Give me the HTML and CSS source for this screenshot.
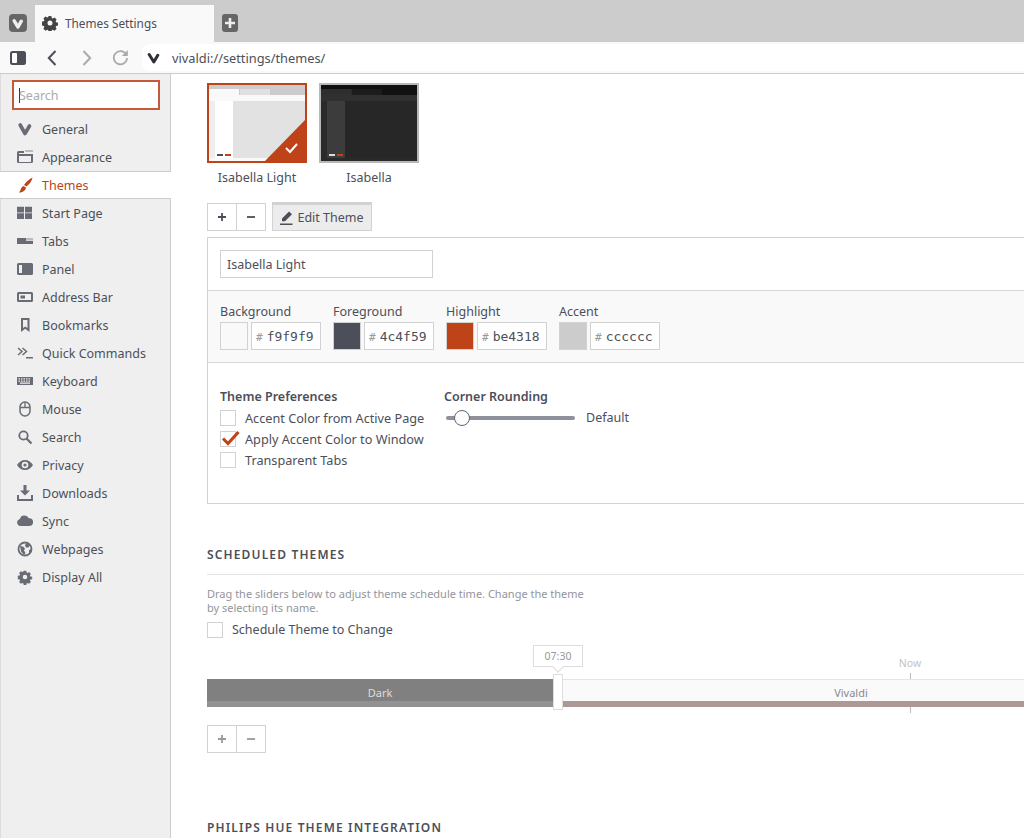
FILE: index.html
```html
<!DOCTYPE html>
<html lang="en">
<head>
    <meta charset="UTF-8">
    <title>Themes Settings</title>
    <link rel="stylesheet" href="styles.css">
</head>
<body>
    <div class="tabbar">
        <div class="vivaldi-btn">
            <svg width="18" height="18" viewBox="0 0 18 18"><rect width="18" height="18" rx="4" fill="#666"/><path d="M5.200 6.800L9 13l3.300-5.800" fill="none" stroke="#eee" stroke-width="3.400" stroke-linecap="round" stroke-linejoin="round"/></svg>
        </div>
        <div class="tab">
            <svg class="tab-icon" width="16" height="16" viewBox="0 0 16 16"><path fill="#444" fill-rule="evenodd" d="M6.600 1h2.800l.4 2 1 .5 1.800-1 2 2-1 1.800.5 1 2 .4v2.800l-2 .4-.5 1 1 1.800-2 2-1.800-1-1 .5-.4 2H6.600l-.4-2-1-.5-1.800 1-2-2 1-1.800-.5-1-2-.4V6.600l2-.4.5-1-1-1.800 2-2 1.800 1 1-.5zM8 5.500a2.500 2.500 0 1 0 0 5 2.500 2.500 0 0 0 0-5z"/></svg>
            <span>Themes Settings</span>
        </div>
        <div class="newtab">
            <svg width="16" height="18" viewBox="0 0 16 18"><rect width="16" height="18" y="0" rx="3" fill="#666"/><path d="M8 4v10M3 9h10" stroke="#eee" stroke-width="2.600"/></svg>
        </div>
    </div>

    <div class="toolbar">
        <svg class="tool panel-toggle" width="16" height="14" viewBox="0 0 16 14"><rect width="16" height="14" rx="2.500" fill="#4c4f59"/><rect x="2" y="2" width="5" height="10" rx="1" fill="#fff"/></svg>
        <svg class="tool back" width="10" height="16" viewBox="0 0 10 16"><path d="M8.500 1L1.800 8l6.700 7" fill="none" stroke="#4c4f59" stroke-width="2"/></svg>
        <svg class="tool forward" width="10" height="16" viewBox="0 0 10 16"><path d="M1.500 1l6.700 7-6.700 7" fill="none" stroke="#a9aaae" stroke-width="2"/></svg>
        <svg class="tool reload" width="17" height="17" viewBox="0 0 17 17"><path d="M14 5.200A6.600 6.600 0 1 0 15 9" fill="none" stroke="#a9aaae" stroke-width="1.800"/><path d="M15.800 1v6h-6z" fill="#a9aaae"/></svg>
        <div class="address">
            <svg width="14" height="12" viewBox="0 0 14 12"><path d="M2.200 2.500L6.800 10l4-6.800" fill="none" stroke="#2f3139" stroke-width="3" stroke-linecap="round" stroke-linejoin="round"/></svg>
            <span>vivaldi://settings/themes/</span>
        </div>
    </div>

    <div class="main">
        <aside class="sidebar">
            <div class="search-wrap">
                <div class="search"><i class="caret"></i>Search</div>
            </div>
            <ul class="nav">
                <li><svg width="16" height="16" viewBox="0 0 16 16"><path d="M3.200 4L8 12.500 12.500 5" fill="none" stroke="#696b75" stroke-width="3.600" stroke-linecap="round" stroke-linejoin="round"/></svg>General</li>
                <li><svg width="16" height="16" viewBox="0 0 16 16"><path d="M0 3.500a1.500 1.500 0 0 1 1.500-1.500H7v2h-5v1h14v7.500a1.500 1.500 0 0 1-1.500 1.500h-13A1.500 1.500 0 0 1 0 12.500zM2 7v6h12V7z" fill="#696b75"/><rect x="8" y="1" width="8" height="2" fill="#b9bac0"/></svg>Appearance</li>
                <li class="active"><svg width="16" height="16" viewBox="0 0 16 16"><path d="M15.500.5C15 4 12.500 7 9.500 9.500L7 8C9 5 12 2 15.500.5zM6.300 9L9 10.500C8.500 14 5.500 15.500 2 15.500 3.800 14 3.500 10.500 6.300 9z" fill="#be4318"/></svg>Themes</li>
                <li><svg width="16" height="16" viewBox="0 0 16 16"><path d="M0 1.700h7v5.700H0zM8 1.700h7v5.700H8zM0 8.300h7V14H0zM8 8.300h7V14H8z" fill="#696b75"/></svg>Start Page</li>
                <li><svg width="16" height="16" viewBox="0 0 16 16"><path d="M0 5h9v3h7v3H0z" fill="#696b75"/><rect x="9" y="5" width="7" height="2.500" fill="#b9bac0"/></svg>Tabs</li>
                <li><svg width="16" height="16" viewBox="0 0 16 16"><path fill-rule="evenodd" d="M1.500 2h13A1.500 1.500 0 0 1 16 3.500v9a1.500 1.500 0 0 1-1.500 1.500h-13A1.500 1.500 0 0 1 0 12.500v-9A1.500 1.500 0 0 1 1.500 2zM2 4v8h3V4z" fill="#696b75"/></svg>Panel</li>
                <li><svg width="16" height="16" viewBox="0 0 16 16"><path fill-rule="evenodd" d="M1.500 3h13A1.500 1.500 0 0 1 16 4.500v7a1.500 1.500 0 0 1-1.500 1.500h-13A1.500 1.500 0 0 1 0 11.500v-7A1.500 1.500 0 0 1 1.500 3zM2 5v6h12V5zM3.500 6.500H8v3H3.500z" fill="#696b75"/></svg>Address Bar</li>
                <li><svg width="16" height="16" viewBox="0 0 16 16"><path fill-rule="evenodd" d="M4 1h8.500v14L8.200 11.800 4 15zM6 3v8l2.200-1.500 2.300 1.500V3z" fill="#696b75"/></svg>Bookmarks</li>
                <li><svg width="16" height="16" viewBox="0 0 16 16"><path d="M1 3l4 3.500L1 10M5.500 3l4 3.500-4 3.500" fill="none" stroke="#696b75" stroke-width="1.500"/><rect x="9" y="12" width="7" height="1.500" fill="#696b75"/></svg>Quick Commands</li>
                <li><svg width="16" height="16" viewBox="0 0 16 16"><path fill-rule="evenodd" d="M0 4h16v8H0zM1.500 5.200v1.300h1.500V5.200zm2.500 0v1.300h1.500V5.200zm2.500 0v1.300H8V5.200zm2.500 0v1.300h1.500V5.200zm2.500 0v1.300h1.500V5.200zM1.500 7.400v1.300h1.500V7.400zm2.500 0v1.300h1.500V7.400zm2.500 0v1.300H8V7.400zm2.500 0v1.300h1.500V7.400zm2.500 0v1.300h1.500V7.400zM3 9.600v1.200h10V9.600z" fill="#696b75"/></svg>Keyboard</li>
                <li><svg width="16" height="16" viewBox="0 0 16 16"><rect x="3" y="1" width="10" height="14" rx="5" fill="none" stroke="#696b75" stroke-width="1.500"/><path d="M3 6.500h10M8 1v5.500" stroke="#696b75" stroke-width="1.300"/></svg>Mouse</li>
                <li><svg width="16" height="16" viewBox="0 0 16 16"><circle cx="6.500" cy="6.500" r="4.200" fill="none" stroke="#696b75" stroke-width="1.800"/><path d="M9.500 9.500l5 5" stroke="#696b75" stroke-width="2.200"/></svg>Search</li>
                <li><svg width="16" height="16" viewBox="0 0 16 16"><path fill-rule="evenodd" d="M0 8c1.800-3 4.600-5 8-5s6.200 2 8 5c-1.800 3-4.600 5-8 5s-6.200-2-8-5zm8-3.300a3.300 3.300 0 1 0 0 6.600 3.300 3.300 0 0 0 0-6.600zM8 6.400a1.600 1.600 0 1 1 0 3.200 1.600 1.600 0 0 1 0-3.200z" fill="#696b75"/></svg>Privacy</li>
                <li><svg width="16" height="16" viewBox="0 0 16 16"><path d="M6.500 0h3v5.500H13L8 10.500 3 5.500h3.500zM0 10h2v4h12v-4h2v6H0z" fill="#696b75"/></svg>Downloads</li>
                <li><svg width="16" height="16" viewBox="0 0 16 16"><path d="M3.500 13A3.500 3.500 0 0 1 2.800 6.100 4.800 4.800 0 0 1 11.800 5.200 3.900 3.900 0 0 1 12.500 13z" fill="#696b75"/></svg>Sync</li>
                <li><svg width="16" height="16" viewBox="0 0 16 16"><circle cx="8" cy="8" r="6.500" fill="none" stroke="#696b75" stroke-width="1.800"/><path d="M3 5l3 .5 2 2-1 2 1.500 2.500-1.500 2-3-3.500zM9 2l4 2-1.500 2.500H9L8 4.500zM12 9l2.500-1-1 4-1.500 1z" fill="#696b75"/></svg>Webpages</li>
                <li><svg width="16" height="16" viewBox="-1 -1 18 18"><path fill="#696b75" fill-rule="evenodd" d="M6.600 1h2.800l.4 2 1 .5 1.800-1 2 2-1 1.800.5 1 2 .4v2.800l-2 .4-.5 1 1 1.800-2 2-1.800-1-1 .5-.4 2H6.600l-.4-2-1-.5-1.800 1-2-2 1-1.800-.5-1-2-.4V6.600l2-.4.5-1-1-1.800 2-2 1.800 1 1-.5zM8 5.500a2.500 2.500 0 1 0 0 5 2.500 2.500 0 0 0 0-5z"/></svg>Display All</li>
            </ul>
        </aside>

        <main class="content">
            <div class="theme-list">
                <div class="theme-item">
                    <svg class="thumb" width="100" height="80" viewBox="0 0 100 80">
                        <rect width="100" height="80" fill="#be4318"/>
                        <rect x="2" y="2" width="96" height="76" fill="#f9f9f9"/>
                        <rect x="2" y="2" width="96" height="10" fill="#ccc"/>
                        <rect x="2" y="6" width="30" height="6" fill="#f9f9f9"/>
                        <rect x="33" y="6" width="30" height="6" fill="#e0e0e0"/>
                        <rect x="2" y="18" width="6" height="57" fill="#eee"/>
                        <rect x="8" y="18" width="18" height="57" fill="#fff"/>
                        <rect x="26" y="18" width="72" height="57" fill="#e2e2e2"/>
                        <rect x="10" y="71" width="6" height="2" fill="#4c4f59"/>
                        <rect x="18" y="71" width="6" height="2" fill="#be4318"/>
                        <path d="M58 78L98 37v43H58z" fill="#be4318"/>
                        <path d="M79 65l4 4 7-8" fill="none" stroke="#fff" stroke-width="2"/>
                    </svg>
                    <span>Isabella Light</span>
                </div>
                <div class="theme-item">
                    <svg class="thumb" width="100" height="80" viewBox="0 0 100 80">
                        <rect width="100" height="80" fill="#b8b8b8"/>
                        <rect x="2" y="2" width="96" height="76" fill="#2a2a2a"/>
                        <rect x="2" y="2" width="96" height="4" fill="#0f0f0f"/>
                        <rect x="2" y="6" width="30" height="6" fill="#2e2e2e"/>
                        <rect x="33" y="6" width="30" height="6" fill="#1c1c1c"/>
                        <rect x="63" y="6" width="35" height="6" fill="#111"/>
                        <rect x="2" y="12" width="96" height="6" fill="#303030"/>
                        <rect x="8" y="18" width="18" height="57" fill="#3c3c3c"/>
                        <rect x="26" y="18" width="72" height="57" fill="#272727"/>
                        <rect x="10" y="71" width="6" height="2" fill="#ddd"/>
                        <rect x="18" y="71" width="6" height="2" fill="#be4318"/>
                    </svg>
                    <span>Isabella</span>
                </div>
            </div>

            <div class="theme-actions">
                <div class="btn-group">
                    <button class="btn-small"><svg width="10" height="10" viewBox="0 0 10 10"><path d="M5 1v8M1 5h8" stroke="#4c4f59" stroke-width="1.800"/></svg></button>
                    <button class="btn-small"><svg width="10" height="10" viewBox="0 0 10 10"><path d="M1 5h8" stroke="#4c4f59" stroke-width="1.800"/></svg></button>
                </div>
                <button class="btn-edit">
                    <svg width="13" height="14" viewBox="0 0 13 14"><path d="M9 .5l3 2.800-7 7H2V7.500zM0 12.500h12.500V14H0z" fill="#4c4f59"/></svg>
                    Edit Theme
                </button>
            </div>

            <section class="editor">
                <div class="editor-name">
                    <div class="name-input">Isabella Light</div>
                </div>
                <div class="colors">
                    <div class="color">
                        <label>Background</label>
                        <div class="color-row"><i class="swatch swatch-bg"></i><div class="hex"><b>#</b>f9f9f9</div></div>
                    </div>
                    <div class="color">
                        <label>Foreground</label>
                        <div class="color-row"><i class="swatch swatch-fg"></i><div class="hex"><b>#</b>4c4f59</div></div>
                    </div>
                    <div class="color">
                        <label>Highlight</label>
                        <div class="color-row"><i class="swatch swatch-hl"></i><div class="hex"><b>#</b>be4318</div></div>
                    </div>
                    <div class="color">
                        <label>Accent</label>
                        <div class="color-row"><i class="swatch swatch-ac"></i><div class="hex"><b>#</b>cccccc</div></div>
                    </div>
                </div>
                <div class="prefs">
                    <div class="pref-col">
                        <h4>Theme Preferences</h4>
                        <div class="check"><i class="box"></i>Accent Color from Active Page</div>
                        <div class="check">
                            <i class="box"><svg class="tick" width="20" height="16" viewBox="0 0 20 16"><path d="M3 7.500l5 5L18.500 1" fill="none" stroke="#be4318" stroke-width="3"/></svg></i>
                            Apply Accent Color to Window
                        </div>
                        <div class="check"><i class="box"></i>Transparent Tabs</div>
                    </div>
                    <div class="round-col">
                        <h4>Corner Rounding</h4>
                        <div class="slider-row">
                            <div class="slider"><i class="slider-thumb"></i></div>
                            <span>Default</span>
                        </div>
                    </div>
                </div>
            </section>

            <h3 class="section-title first">SCHEDULED THEMES</h3>
            <p class="hint">Drag the sliders below to adjust theme schedule time. Change the theme<br>by selecting its name.</p>
            <div class="check check-schedule"><i class="box"></i>Schedule Theme to Change</div>

            <div class="timeline">
                <div class="seg seg-dark"><span>Dark</span></div>
                <div class="seg seg-light"><span>Vivaldi</span></div>
                <div class="handle"></div>
                <div class="time-tip">07:30</div>
                <div class="now">Now</div>
                <i class="now-tick now-top"></i>
                <i class="now-tick now-bottom"></i>
            </div>

            <div class="btn-group btn-group-off">
                <button class="btn-small"><svg width="10" height="10" viewBox="0 0 10 10"><path d="M5 1v8M1 5h8" stroke="#9a9a9a" stroke-width="1.800"/></svg></button>
                <button class="btn-small"><svg width="10" height="10" viewBox="0 0 10 10"><path d="M1 5h8" stroke="#9a9a9a" stroke-width="1.800"/></svg></button>
            </div>

            <h3 class="section-title hue">PHILIPS HUE THEME INTEGRATION</h3>
        </main>
    </div>
</body>
</html>
```

FILE: styles.css
```css
/* General */
html, body {
    margin: 0;
    height: 838px;
    overflow: hidden;
}
body {
    font-family: "Noto Sans", sans-serif;
    font-size: 12.5px;
    color: #4c4f59;
    background: #fff;
}
svg {
    display: block;
    flex: none;
}

/* Tab bar */
.tabbar {
    height: 42px;
    background: #ccc;
    display: flex;
    align-items: flex-end;
}
.vivaldi-btn {
    margin: 0 8px 10px 9px;
}
.tab {
    width: 179px;
    height: 37px;
    background: #f9f9f9;
    display: flex;
    align-items: center;
    box-sizing: border-box;
    padding: 0 0 1px 7px;
    gap: 7px;
    font-size: 11.8px;
}
.newtab {
    margin: 0 0 10px 8px;
}

/* Toolbar */
.toolbar {
    height: 31px;
    background: #f9f9f9;
    display: flex;
    align-items: center;
    border-bottom: 1px solid #ccc;
}
.panel-toggle { margin-left: 10px; }
.back { margin-left: 21px; }
.forward { margin-left: 25px; }
.reload { margin-left: 20px; }
.address {
    margin-left: 13px;
    flex: 1;
    height: 27px;
    background: #fff;
    border-radius: 8px 0 0 8px;
    display: flex;
    align-items: center;
    padding-left: 5px;
    gap: 11px;
    font-size: 12.8px;
}

/* Layout */
.main {
    display: flex;
    height: 764px;
}
.sidebar {
    flex: none;
    box-sizing: border-box;
    background: #efefef;
    border-left: 1px solid #ddd;
    border-right: 1px solid #ccc;
    width: 171px;
    padding-top: 6px;
}
.search-wrap {
    padding: 0 10px 0 11px;
}
.search {
    height: 30px;
    box-sizing: border-box;
    border: 2px solid #c4593b;
    background: #fff;
    color: #aaa;
    display: flex;
    align-items: center;
    padding-left: 5px;
}
.caret {
    width: 1px;
    height: 15px;
    background: #333;
    margin-right: -1px;
}
.nav {
    list-style: none;
    margin: 5px 0 0;
    padding: 0;
}
.nav li {
    height: 28px;
    box-sizing: border-box;
    display: flex;
    align-items: center;
    gap: 9px;
    padding-left: 16px;
}
.nav li.active {
    background: #fff;
    color: #be4318;
    margin-right: -1px;
    margin-left: -1px;
    padding-left: 17px;
    border-top: 1px solid #ccc;
    border-bottom: 1px solid #ccc;
}

/* Content */
.content {
    flex: 1;
    min-width: 0;
    padding: 9px 0 0 36px;
    overflow: hidden;
}
.theme-list {
    display: flex;
    gap: 12px;
}
.theme-item {
    width: 100px;
    text-align: center;
}
.theme-item span {
    display: block;
    margin-top: 6px;
    line-height: 17px;
    white-space: nowrap;
}

.theme-actions {
    display: flex;
    align-items: flex-end;
    gap: 6px;
    margin-top: 16px;
}
.btn-group {
    display: flex;
}
.btn-small {
    width: 30px;
    height: 28px;
    padding: 0;
    border: 1px solid #d2d2d2;
    background: #fff;
    display: flex;
    align-items: center;
    justify-content: center;
}
.btn-small + .btn-small {
    margin-left: -1px;
}
.btn-edit {
    height: 29px;
    width: 100px;
    padding: 0;
    border: 1px solid #d2d2d2;
    border-top-width: 3px;
    background: #ececec;
    color: #4c4f59;
    font: inherit;
    display: flex;
    align-items: center;
    justify-content: center;
    gap: 4px;
}

/* Theme editor */
.editor {
    margin-top: 6px;
    height: 267px;
    box-sizing: border-box;
    border: 1px solid #d2d2d2;
    border-right: 0;
}
.editor-name {
    height: 53px;
    box-sizing: border-box;
    padding: 12px 12px 0;
    border-bottom: 1px solid #d8d8d8;
}
.name-input {
    width: 213px;
    height: 28px;
    box-sizing: border-box;
    border: 1px solid #d2d2d2;
    padding-left: 6px;
    line-height: 28px;
}
.colors {
    height: 72px;
    box-sizing: border-box;
    background: #f9f9f9;
    border-bottom: 1px solid #d8d8d8;
    display: flex;
    padding: 12px 0 0 12px;
    gap: 12px;
}
.color {
    width: 101px;
}
.color label {
    display: block;
    line-height: 17px;
    margin-bottom: 2px;
}
.color-row {
    display: flex;
    gap: 3px;
}
.swatch {
    width: 28px;
    height: 28px;
    box-sizing: border-box;
    border: 1px solid #d2d2d2;
}
.swatch-bg { background: #f9f9f9; }
.swatch-fg { background: #4c4f59; }
.swatch-hl { background: #be4318; }
.swatch-ac { background: #ccc; }
.hex {
    width: 70px;
    height: 28px;
    box-sizing: border-box;
    border: 1px solid #d2d2d2;
    background: #fff;
    font-family: "DejaVu Sans Mono", monospace;
    font-size: 13px;
    line-height: 28px;
    padding-left: 4px;
    white-space: nowrap;
}
.hex b {
    font-weight: normal;
    color: #999;
    margin-right: 4px;
    font-size: 11px;
}

/* Preferences */
.prefs {
    display: flex;
    padding: 25px 0 0 12px;
}
.prefs h4 {
    margin: 0 0 2px;
    font-size: 12.5px;
    font-weight: 600;
    line-height: 17px;
}
.prefs .check {
    font-size: 12.7px;
}
.pref-col {
    width: 224px;
}
.check {
    height: 21px;
    display: flex;
    align-items: center;
    gap: 9px;
    white-space: nowrap;
}
.box {
    width: 16px;
    height: 16px;
    box-sizing: border-box;
    border: 1px solid #d2d2d2;
    background: #fff;
    flex: none;
    position: relative;
}
.tick {
    position: absolute;
    left: -1px;
    top: -1px;
}
.slider-row {
    display: flex;
    align-items: center;
    gap: 11px;
    height: 21px;
    margin: 1px 0 0 2px;
}
.slider {
    width: 129px;
    height: 4px;
    background: #8e909a;
    border-radius: 2px;
    position: relative;
}
.slider-thumb {
    position: absolute;
    left: 8px;
    top: -6px;
    width: 16px;
    height: 16px;
    box-sizing: border-box;
    border: 1px solid #60636d;
    border-radius: 50%;
    background: #fff;
}

/* Scheduled themes */
.section-title {
    margin: 0;
    font-size: 12px;
    font-weight: 600;
    letter-spacing: 1.15px;
    line-height: 17px;
}
.section-title.first {
    margin-top: 42px;
    padding-bottom: 11px;
    border-bottom: 1px solid #e4e4e4;
}
.hint {
    margin: 12px 0 0;
    font-size: 11px;
    line-height: 14px;
    color: #93959d;
}
.check-schedule {
    margin-top: 4px;
}
.timeline {
    position: relative;
    display: flex;
    margin-top: 39px;
    height: 28px;
}
.seg {
    box-sizing: border-box;
    border-bottom: 6px solid;
    text-align: center;
    font-size: 11px;
    line-height: 27px;
    flex: none;
}
.seg-dark {
    width: 346px;
    background: #808080;
    border-color: #929292;
    color: #ddd;
}
.seg-light {
    width: 596px;
    background: #fafafa;
    border-top: 1px solid #e4e4e4;
    border-color: #e4e4e4 #e4e4e4 #ae9895;
    color: #8a8a8a;
    line-height: 26px;
}
.handle {
    position: absolute;
    left: 346px;
    top: -5px;
    width: 10px;
    height: 36px;
    box-sizing: border-box;
    border: 1px solid #ddd;
    background: #fff;
}
.time-tip {
    position: absolute;
    left: 326px;
    top: -34px;
    width: 50px;
    height: 22px;
    box-sizing: border-box;
    border: 1px solid #ddd;
    background: #fff;
    text-align: center;
    font-size: 10.5px;
    line-height: 20px;
    color: #999;
}
.time-tip::after {
    content: "";
    position: absolute;
    left: 20px;
    bottom: -5px;
    width: 8px;
    height: 8px;
    box-sizing: border-box;
    border-right: 1px solid #ddd;
    border-bottom: 1px solid #ddd;
    background: #fff;
    transform: rotate(45deg);
}
.now {
    position: absolute;
    left: 683px;
    top: -23px;
    width: 40px;
    text-align: center;
    font-size: 10.5px;
    line-height: 14px;
    color: #c4c4c4;
}
.now-tick {
    position: absolute;
    left: 703px;
    width: 1px;
    height: 6px;
    background: #bbb;
}
.now-top { top: -6px; }
.now-bottom { top: 28px; }

.btn-group-off {
    margin-top: 18px;
}
.section-title.hue {
    margin-top: 66px;
}
```
